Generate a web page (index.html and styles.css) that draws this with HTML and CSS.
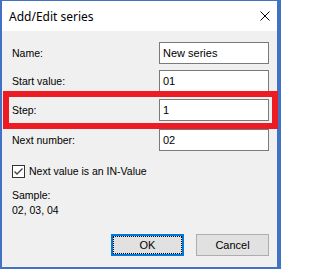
FILE: index.html
```html
<!DOCTYPE html>
<html>
<head>
<meta charset="utf-8">
<link rel="stylesheet" href="styles.css">
</head>
<body>
<div class="window">
  <div class="titlebar">
    <span class="title">Add/Edit series</span>
    <svg class="close" width="10" height="10" viewBox="0 0 10 10"><path d="M0.5 0.5 L9.5 9.5 M9.5 0.5 L0.5 9.5" stroke="#000" stroke-width="1" fill="none"/></svg>
  </div>
  <div class="content">
    <div class="row r1"><span class="label">Name:</span><div class="input">New series</div></div>
    <div class="row r2"><span class="label">Start value:</span><div class="input">01</div></div>
    <div class="row r3"><span class="label">Step:</span><div class="input">1</div></div>
    <div class="row r4"><span class="label">Next number:</span><div class="input">02</div></div>
    <div class="check">
      <svg class="box" width="13" height="13" viewBox="0 0 13 13"><rect x="0.5" y="0.5" width="12" height="12" fill="#fff" stroke="#333"/><path d="M2.5 6.5 L5 9 L10.5 3.5" stroke="#444" stroke-width="1.4" fill="none"/></svg>
      <span>Next value is an IN-Value</span>
    </div>
    <div class="sample">
      <div>Sample:</div>
      <div>02, 03, 04</div>
    </div>
    <div class="buttons">
      <div class="btn default">OK</div>
      <div class="btn">Cancel</div>
    </div>
  </div>
  <div class="highlight"></div>
</div>
</body>
</html>
```
FILE: styles.css
```css
html, body {
  margin: 0;
  padding: 0;
  background: #fff;
}
.window {
  position: relative;
  width: 281px;
  height: 269px;
  box-sizing: border-box;
  border-style: solid;
  border-color: #4272c4;
  border-width: 1px 4px 2px 2px;
  display: flex;
  flex-direction: column;
  font-family: "Liberation Sans", Arial, sans-serif;
  font-size: 10.5px;
  color: #000;
}
.titlebar {
  height: 30px;
  flex: none;
  background: #fff;
  display: flex;
  align-items: center;
  justify-content: space-between;
  padding: 0 7px 0 7px;
}
.title {
  font-family: "Noto Sans", "Open Sans", sans-serif;
  font-size: 12px;
  line-height: 16px;
  margin-top: 1px;
}
.close {
  display: block;
  margin-top: 0;
}
.content {
  flex: 1;
  background: #f0f0f0;
  padding: 0 8px 0 10px;
  display: flex;
  flex-direction: column;
}
.row {
  display: flex;
  align-items: center;
  justify-content: space-between;
  height: 22px;
}
.r1 { margin-top: 11px; }
.r2 { margin-top: 6px; }
.r3 { margin-top: 7px; }
.r4 { margin-top: 8px; }
.label {
  line-height: 14px;
}
.input {
  width: 110px;
  height: 22px;
  box-sizing: border-box;
  border: 1px solid #7a7a7a;
  background: #fff;
  padding: 0 3px;
  line-height: 20px;
  font-size: 11px;
}
.check {
  margin-top: 14px;
  display: flex;
  align-items: center;
  gap: 4px;
  height: 13px;
  line-height: 13px;
}
.box {
  display: block;
}
.sample {
  margin-top: 10px;
  line-height: 15px;
}
.buttons {
  margin-top: 16px;
  display: flex;
  justify-content: flex-end;
  gap: 12px;
}
.btn {
  width: 73px;
  height: 22px;
  box-sizing: border-box;
  border: 1px solid #adadad;
  background: #e1e1e1;
  display: flex;
  align-items: center;
  justify-content: center;
  font-size: 11px;
}
.btn.default {
  border: 2px solid #0078d7;
  outline: 1px dotted #000;
  outline-offset: -3px;
}
.highlight {
  position: absolute;
  left: 1px;
  top: 90px;
  width: 275px;
  height: 38px;
  box-sizing: border-box;
  border: 6px solid #ed1c24;
}
```
